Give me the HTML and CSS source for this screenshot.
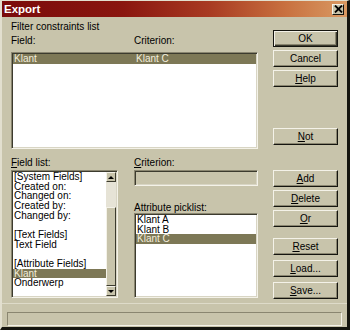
FILE: index.html
```html
<!DOCTYPE html>
<html lang="en">
<head>
    <meta charset="UTF-8">
    <title>Export</title>
    <link rel="stylesheet" href="styles.css">
</head>
<body>

<div class="window">
    <div class="titlebar">
        <span class="title">Export</span>
        <span class="close">
            <svg width="9" height="8" viewBox="0 0 9 8"><path d="M1 0.5 L8 7.5 M8 0.5 L1 7.5" stroke="#000" stroke-width="1.8"/></svg>
        </span>
    </div>

    <div class="body">
        <div class="left">
            <div class="label">Filter constraints list</div>
            <div class="label label-row"><span class="col-field">Field:</span><span>Criterion:</span></div>
            <div class="listbox constraints">
                <div class="row selected"><span class="col-value">Klant</span><span>Klant C</span></div>
            </div>

            <div class="lower">
                <div class="field-col">
                    <div class="label"><u>F</u>ield list:</div>
                    <div class="listbox fields">
                        <div class="items">
                            <div class="row">[System Fields]</div>
                            <div class="row">Created on:</div>
                            <div class="row">Changed on:</div>
                            <div class="row">Created by:</div>
                            <div class="row">Changed by:</div>
                            <div class="row">&nbsp;</div>
                            <div class="row">[Text Fields]</div>
                            <div class="row">Text Field</div>
                            <div class="row">&nbsp;</div>
                            <div class="row">[Attribute Fields]</div>
                            <div class="row selected">Klant</div>
                            <div class="row">Onderwerp</div>
                        </div>
                        <div class="scrollbar">
                            <div class="sb-btn"><span class="arrow-up"></span></div>
                            <div class="sb-track"></div>
                            <div class="sb-thumb"></div>
                            <div class="sb-btn"><span class="arrow-down"></span></div>
                        </div>
                    </div>
                </div>

                <div class="crit-col">
                    <div class="label"><u>C</u>riterion:</div>
                    <div class="textbox"></div>
                    <div class="label attr-label">Attribute picklist:</div>
                    <div class="listbox attrs">
                        <div class="row">Klant A</div>
                        <div class="row">Klant B</div>
                        <div class="row selected">Klant C</div>
                    </div>
                </div>
            </div>
        </div>

        <div class="buttons">
            <button class="btn default">OK</button>
            <button class="btn">Cancel</button>
            <button class="btn"><u>H</u>elp</button>
            <button class="btn gap-not"><u>N</u>ot</button>
            <button class="btn gap-add"><u>A</u>dd</button>
            <button class="btn"><u>D</u>elete</button>
            <button class="btn"><u>O</u>r</button>
            <button class="btn gap-reset"><u>R</u>eset</button>
            <button class="btn gap-load"><u>L</u>oad...</button>
            <button class="btn gap-load"><u>S</u>ave...</button>
        </div>
    </div>

    <div class="statusbar">
        <div class="status-field"></div>
    </div>
</div>

</body>
</html>
```

FILE: styles.css
```css
body {
    margin: 0;
    padding: 0;
    background-color: #c8c4ab;
    font-family: "Liberation Sans Narrow", "Liberation Sans", Arial, sans-serif;
    font-size: 10px;
    color: #000;
}

.window {
    width: 350px;
    height: 330px;
    box-sizing: border-box;
    display: flex;
    flex-direction: column;
    background-color: #c8c4ab;
    border-style: solid;
    border-width: 1px 3px 3px 2px;
    border-color: #e2dfcf #15150f #15150f #e2dfcf;
}

/* Title bar */
.titlebar {
    height: 16px;
    display: flex;
    align-items: center;
    justify-content: space-between;
    padding: 0 3px 0 2px;
    background: linear-gradient(to right, #7a0b0b 0%, #8a160f 35%, #a83a22 60%, #c8703f 82%, #d99a63 100%);
}
.title {
    color: #fff;
    font-weight: bold;
    font-size: 11.5px;
}
.close {
    width: 12px;
    height: 11px;
    display: flex;
    align-items: center;
    justify-content: center;
    background-color: #c8c4ab;
    border: 1px solid;
    border-color: #f4f2e8 #15150f #15150f #f4f2e8;
    box-sizing: border-box;
}

/* Main area */
.body {
    flex: 1;
    display: flex;
    padding: 4px 9px 0 9px;
}
.left {
    width: 247px;
}
.label {
    height: 11px;
    line-height: 11px;
    white-space: nowrap;
}
.label-row {
    display: flex;
    margin-top: 3px;
}
.col-field {
    width: 123px;
}
.col-value {
    width: 122px;
}

/* Sunken list boxes */
.listbox {
    background-color: #fff;
    border: 1px solid;
    border-color: #8a8670 #f4f2e8 #f4f2e8 #8a8670;
    box-shadow: inset 1px 1px #3c3b2e, inset -1px -1px #d8d5c4;
    padding: 1px;
    box-sizing: border-box;
    overflow: hidden;
}
.row {
    height: 9.66px;
    line-height: 9.66px;
    padding-left: 1px;
    white-space: nowrap;
    display: flex;
}
.row.selected {
    background-color: #7d7856;
    color: #f2eedc;
}
.constraints {
    margin-top: 6px;
    height: 97px;
}

.lower {
    display: flex;
    margin-top: 8px;
}
.field-col {
    width: 107px;
}
.crit-col {
    width: 124px;
    margin-left: 16px;
}
.fields {
    margin-top: 2px;
    height: 128px;
    display: flex;
}
.items {
    flex: 1;
}
.textbox {
    margin-top: 2px;
    height: 16px;
    border: 1px solid;
    border-color: #8a8670 #f4f2e8 #f4f2e8 #8a8670;
    box-shadow: inset 1px 1px #3c3b2e, inset -1px -1px #d8d5c4;
    box-sizing: border-box;
}
.attr-label {
    margin-top: 16px;
}
.attrs {
    height: 85px;
}

/* Scrollbar */
.scrollbar {
    width: 10px;
    display: flex;
    flex-direction: column;
}
.sb-btn {
    height: 10px;
    display: flex;
    align-items: center;
    justify-content: center;
}
.sb-btn,
.sb-thumb {
    background-color: #c8c4ab;
    border: 1px solid;
    border-color: #f4f2e8 #3c3b2e #3c3b2e #f4f2e8;
    box-sizing: border-box;
}
.sb-track {
    height: 25px;
    background-color: #e6e3d6;
}
.sb-thumb {
    height: 79px;
}
.arrow-up,
.arrow-down {
    width: 0;
    height: 0;
    border-left: 3px solid transparent;
    border-right: 3px solid transparent;
}
.arrow-up {
    border-bottom: 3px solid #000;
}
.arrow-down {
    border-top: 3px solid #000;
}

/* Buttons */
.buttons {
    width: 65px;
    margin-left: 15px;
    display: flex;
    flex-direction: column;
    padding-top: 9px;
}
.btn {
    height: 17px;
    margin: 3px 0 0 0;
    padding: 0;
    font: inherit;
    color: #000;
    background-color: #c8c4ab;
    border: 1px solid;
    border-color: #f4f2e8 #15150f #15150f #f4f2e8;
    box-shadow: inset -1px -1px #8a8670;
}
.btn.default {
    margin-top: 0;
    border-color: #15150f;
    box-shadow: inset 1px 1px #f4f2e8, inset -1px -1px #3c3b2e, inset -2px -2px #8a8670;
}
.gap-not {
    margin-top: 41px;
}
.gap-add {
    margin-top: 25px;
}
.gap-reset {
    margin-top: 11px;
}
.gap-load {
    margin-top: 5px;
}

/* Status bar */
.statusbar {
    height: 24px;
    padding: 8px 5px 2px 5px;
    box-sizing: border-box;
    border-top: 1px solid #dedbc9;
}
.status-field {
    height: 14px;
    border: 1px solid;
    border-color: #8a8670 #f4f2e8 #f4f2e8 #8a8670;
    box-sizing: border-box;
}
```
